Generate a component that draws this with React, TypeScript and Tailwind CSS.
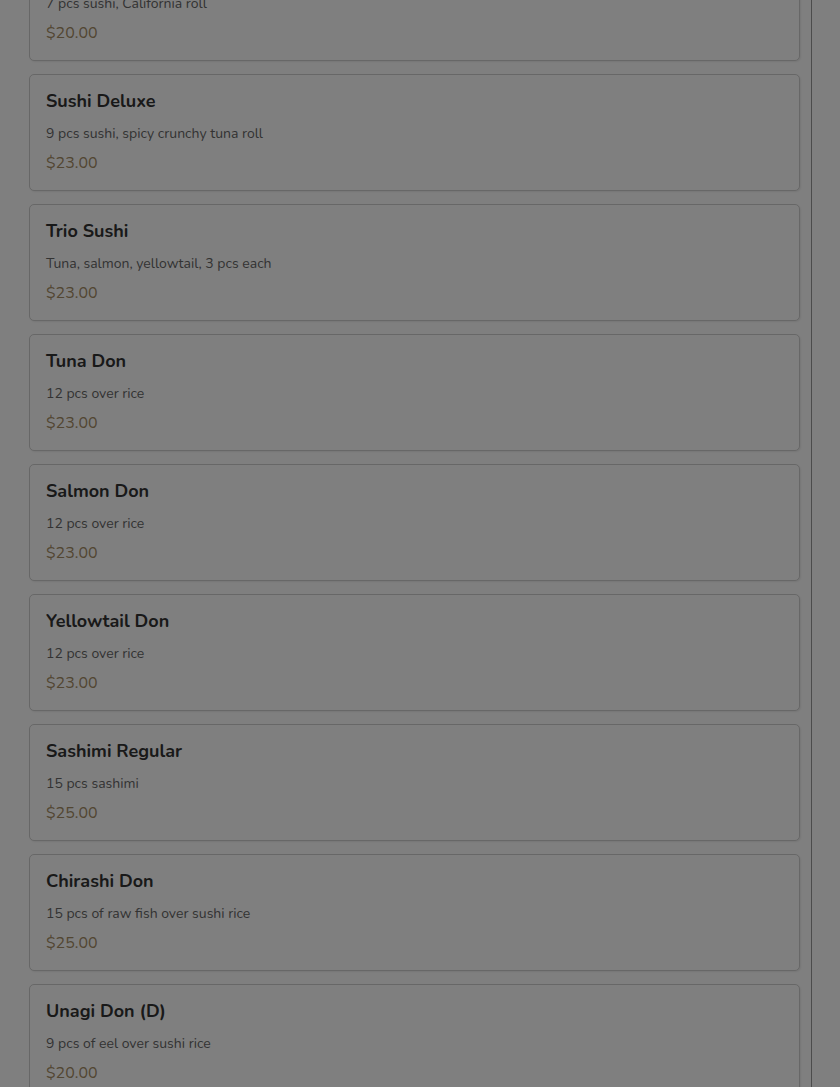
import React from 'react';

const items = [
  { name: 'Sushi Regular', desc: '7 pcs sushi, California roll', price: '$20.00' },
  { name: 'Sushi Deluxe', desc: '9 pcs sushi, spicy crunchy tuna roll', price: '$23.00' },
  { name: 'Trio Sushi', desc: 'Tuna, salmon, yellowtail, 3 pcs each', price: '$23.00' },
  { name: 'Tuna Don', desc: '12 pcs over rice', price: '$23.00' },
  { name: 'Salmon Don', desc: '12 pcs over rice', price: '$23.00' },
  { name: 'Yellowtail Don', desc: '12 pcs over rice', price: '$23.00' },
  { name: 'Sashimi Regular', desc: '15 pcs sashimi', price: '$25.00' },
  { name: 'Chirashi Don', desc: '15 pcs of raw fish over sushi rice', price: '$25.00' },
  { name: 'Unagi Don (D)', desc: '9 pcs of eel over sushi rice', price: '$20.00' },
];

function MenuCard({ name, desc, price }: { name: string; desc: string; price: string }) {
  return (
    <div className="bg-white border border-[#cfcfcf] rounded-[5px] shadow-[1px_1px_2px_rgba(0,0,0,0.08)] px-4 pt-[14px] pb-[15px] cursor-pointer">
      <h3 className="text-[18px] leading-6 font-bold text-[#333]">{name}</h3>
      <p className="mt-[11px] text-[14px] leading-5 text-[#666]">{desc}</p>
      <p className="mt-[7px] text-[16px] leading-6 text-[#a48c64]">{price}</p>
    </div>
  );
}

export default function App() {
  return (
    <div
      className="h-[1087px] overflow-hidden bg-white flex"
      style={{ fontFamily: 'Nunito, Lato, "Noto Sans", sans-serif' }}
    >
      <main className="w-[812px] shrink-0 border-r border-[#999] pl-[29px] pr-[11px]">
        <div className="-mt-[56px] flex flex-col gap-[13px]">
          {items.map((it) => (
            <MenuCard key={it.name} {...it} />
          ))}
        </div>
      </main>
      <aside className="flex-1 bg-white" />
      <div className="fixed inset-0 bg-black/50" />
    </div>
  );
}
